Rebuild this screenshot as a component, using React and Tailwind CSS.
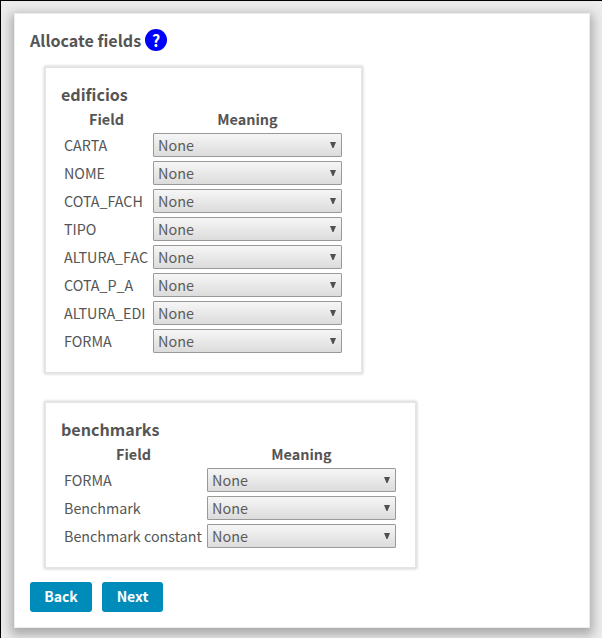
function Meaning() {
  return (
    <div className="relative h-6 w-[189px]">
      <select className="block h-6 w-full appearance-none rounded-[1px] border border-[#999] bg-linear-to-b from-[#f6f6f6] to-[#dcdcdc] pl-1 text-[14.4px] leading-[22px] text-[#5c5c5c]">
        <option>None</option>
      </select>
      <svg className="pointer-events-none absolute top-[9px] right-[6px]" width="6" height="6" viewBox="0 0 6 6">
        <path d="M0 0H6L3.5 6H2.5Z" fill="#505050" />
      </svg>
    </div>
  );
}

function FieldBox({ title, fields, boxClass, columnClass }) {
  return (
    <section className={`rounded-[1px] border-2 border-[#e4e4e4] pt-[15px] pl-[15px] shadow-[0_0_3px_#ccc] ${boxClass}`}>
      <h2 className="h-[23px] text-[16.1px] leading-[22px] font-bold">{title}</h2>
      <div className={`grid gap-x-1 pl-[3px] ${columnClass}`}>
        <div className="h-[27px] text-center text-[14.4px] leading-[26px] font-bold">Field</div>
        <div className="h-[27px] text-center text-[14.4px] leading-[26px] font-bold">Meaning</div>
        {fields.map((field) => (
          <div key={field} className="col-span-2 grid h-7 grid-cols-subgrid">
            <span className="text-[14.3px] leading-6 whitespace-nowrap text-[#555]">{field}</span>
            <Meaning />
          </div>
        ))}
      </div>
    </section>
  );
}

export default function App() {
  return (
    <div className="h-[638px] w-[602px] overflow-hidden border-t border-l border-black bg-[#ececec] pt-3 pl-[13px] font-['Noto_Sans_CJK_SC',sans-serif] text-[#555]">
      <main className="h-[615px] w-[576px] border border-[#ececec] bg-white pt-[15px] pl-[15px] shadow-[0_4px_10px_3px_#aaa]">
        <h1 className="flex h-[22px] items-center gap-1 text-[16.1px] leading-[22px] font-bold">
          <span className="w-[111px] whitespace-nowrap">Allocate fields</span>
          <span className="flex size-[22px] items-center justify-center rounded-full bg-[#00f] text-[16px] leading-[22px] text-white">?</span>
        </h1>
        <FieldBox
          title="edificios"
          fields={["CARTA", "NOME", "COTA_FACH", "TIPO", "ALTURA_FAC", "COTA_P_A", "ALTURA_EDI", "FORMA"]}
          boxClass="mt-[15px] ml-[14px] h-[308px] w-[319px]"
          columnClass="grid-cols-[85px_189px]"
        />
        <FieldBox
          title="benchmarks"
          fields={["FORMA", "Benchmark", "Benchmark constant"]}
          boxClass="mt-[27px] ml-[14px] h-[168px] w-[373px]"
          columnClass="grid-cols-[139px_189px]"
        />
        <div className="mt-[13px] flex gap-[10px] text-[14px] font-bold text-white">
          <button className="h-[30px] w-[62px] rounded-[3px] bg-[#008cba] pb-px leading-[29px]">Back</button>
          <button className="h-[30px] w-[61px] rounded-[3px] bg-[#008cba] pb-px leading-[29px]">Next</button>
        </div>
      </main>
    </div>
  );
}
